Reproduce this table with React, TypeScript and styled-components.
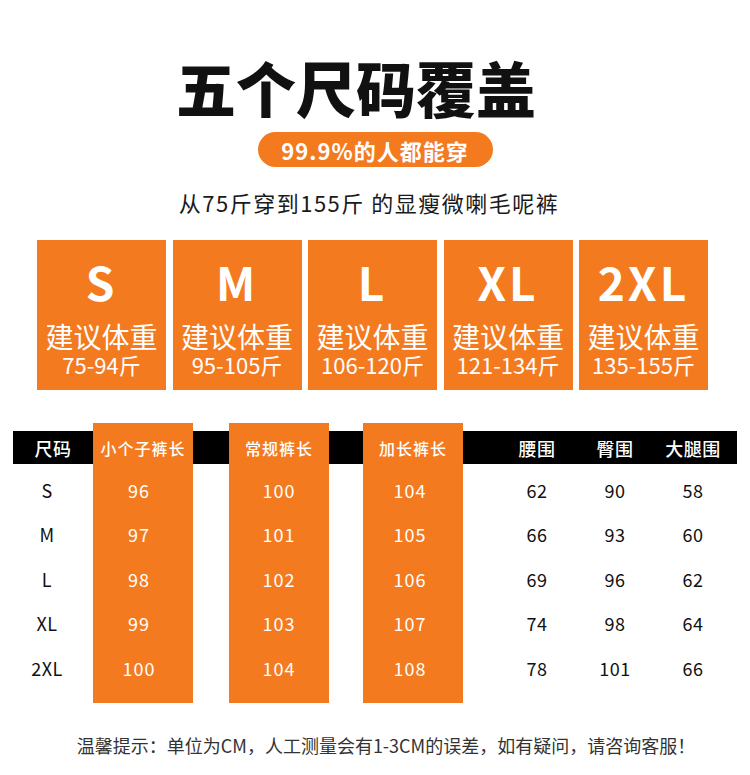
import React from "react";
import styled, { createGlobalStyle } from "styled-components";

const ORANGE = "#f47a20";
const FONT = `"Noto Sans CJK SC", "Noto Sans", sans-serif`;

const Global = createGlobalStyle`
  html, body { margin: 0; padding: 0; background: #fff; }
  body { font-family: ${FONT}; }
`;

const Page = styled.div`
  width: 750px;
  height: 775px;
  display: flex;
  flex-direction: column;
  align-items: center;
  overflow: hidden;
`;

const Title = styled.h1`
  margin: 51px 38px 0 0;
  font-size: 60px;
  line-height: 72px;
  font-weight: 900;
  color: #111;
`;

const Pill = styled.div`
  margin-top: 9px;
  width: 235px;
  height: 35px;
  border-radius: 18px;
  background: ${ORANGE};
  color: #fff;
  font-size: 22px;
  font-weight: 700;
  letter-spacing: 1px;
  display: flex;
  align-items: center;
  justify-content: center;
`;

const Subtitle = styled.div`
  margin: 19px 12px 0 0;
  font-size: 22px;
  line-height: 32px;
  color: #1a1a1a;
  letter-spacing: 1.5px;
`;

const Cards = styled.div`
  margin: 22px 5px 0 0;
  display: flex;
  gap: 6.5px;
`;

const Card = styled.div`
  width: 129px;
  height: 150px;
  background: ${ORANGE};
  color: #fff;
  display: flex;
  flex-direction: column;
  align-items: center;
  padding-top: 16px;
  box-sizing: border-box;
`;

const SizeLetter = styled.div`
  font-size: 46px;
  line-height: 50px;
  font-weight: 700;
  letter-spacing: 3px;
`;

const CardLabel = styled.div`
  margin-top: 16px;
  font-size: 28px;
  line-height: 28px;
  font-weight: 400;
`;

const CardRange = styled.div`
  margin-top: 3px;
  font-size: 22px;
  line-height: 22px;
`;

const Table = styled.div`
  align-self: flex-start;
  margin: 33px 0 0 13px;
  display: flex;
  align-items: flex-start;
`;

const Column = styled.div<{ $w: number; $hl?: boolean }>`
  width: ${(p) => p.$w}px;
  display: flex;
  flex-direction: column;
  background: ${(p) => (p.$hl ? ORANGE : "transparent")};
  color: ${(p) => (p.$hl ? "#fff" : "#111")};
  padding: ${(p) => (p.$hl ? "8px 0 13px" : "8px 0 0")};
`;

const HeadCell = styled.div<{ $hl?: boolean }>`
  height: 33px;
  background: ${(p) => (p.$hl ? "transparent" : "#000")};
  color: #fff;
  display: flex;
  align-items: center;
  justify-content: center;
  font-size: ${(p) => (p.$hl ? "16px" : "18px")};
  letter-spacing: ${(p) => (p.$hl ? "1px" : "0.5px")};
  font-weight: 500;
  white-space: nowrap;
`;

const Rows = styled.div<{ $shift?: number }>`
  padding-top: 3.5px;
  padding-right: ${(p) => p.$shift ?? 0}px;
  display: flex;
  flex-direction: column;
`;

const Cell = styled.div<{ $hl?: boolean }>`
  height: 44.5px;
  display: flex;
  align-items: center;
  justify-content: center;
  font-size: 18px;
  letter-spacing: ${(p) => (p.$hl ? "1px" : "0.5px")};
`;

const Footer = styled.div`
  margin: 30px 0 0 22px;
  font-size: 18px;
  line-height: 24px;
  color: #333;
`;

const sizes = [
  { s: "S", r: "75-94斤" },
  { s: "M", r: "95-105斤" },
  { s: "L", r: "106-120斤" },
  { s: "XL", r: "121-134斤" },
  { s: "2XL", r: "135-155斤" },
];

type Col = { w: number; head?: string; hl?: boolean; vals?: string[]; shift?: number };

const columns: Col[] = [
  { w: 80, head: "尺码", vals: ["S", "M", "L", "XL", "2XL"], shift: 12 },
  { w: 100, head: "小个子裤长", hl: true, vals: ["96", "97", "98", "99", "100"], shift: 8 },
  { w: 36 },
  { w: 100, head: "常规裤长", hl: true, vals: ["100", "101", "102", "103", "104"] },
  { w: 34 },
  { w: 100, head: "加长裤长", hl: true, vals: ["104", "105", "106", "107", "108"], shift: 6 },
  { w: 35 },
  { w: 78, head: "腰围", vals: ["62", "66", "69", "74", "78"] },
  { w: 78, head: "臀围", vals: ["90", "93", "96", "98", "101"] },
  { w: 78, head: "大腿围", vals: ["58", "60", "62", "64", "66"] },
  { w: 5 },
];

export default function App() {
  return (
    <>
      <Global />
      <Page>
        <Title>五个尺码覆盖</Title>
        <Pill>99.9%的人都能穿</Pill>
        <Subtitle>从75斤穿到155斤 的显瘦微喇毛呢裤</Subtitle>
        <Cards>
          {sizes.map((c) => (
            <Card key={c.s}>
              <SizeLetter>{c.s}</SizeLetter>
              <CardLabel>建议体重</CardLabel>
              <CardRange>{c.r}</CardRange>
            </Card>
          ))}
        </Cards>
        <Table>
          {columns.map((c, i) => (
            <Column key={i} $w={c.w} $hl={c.hl}>
              <HeadCell $hl={c.hl}>{c.head ?? ""}</HeadCell>
              {c.vals && (
                <Rows $shift={c.shift}>
                  {c.vals.map((v, j) => (
                    <Cell key={j} $hl={c.hl}>
                      {v}
                    </Cell>
                  ))}
                </Rows>
              )}
            </Column>
          ))}
        </Table>
        <Footer>温馨提示：单位为CM，人工测量会有1-3CM的误差，如有疑问，请咨询客服！</Footer>
      </Page>
    </>
  );
}
